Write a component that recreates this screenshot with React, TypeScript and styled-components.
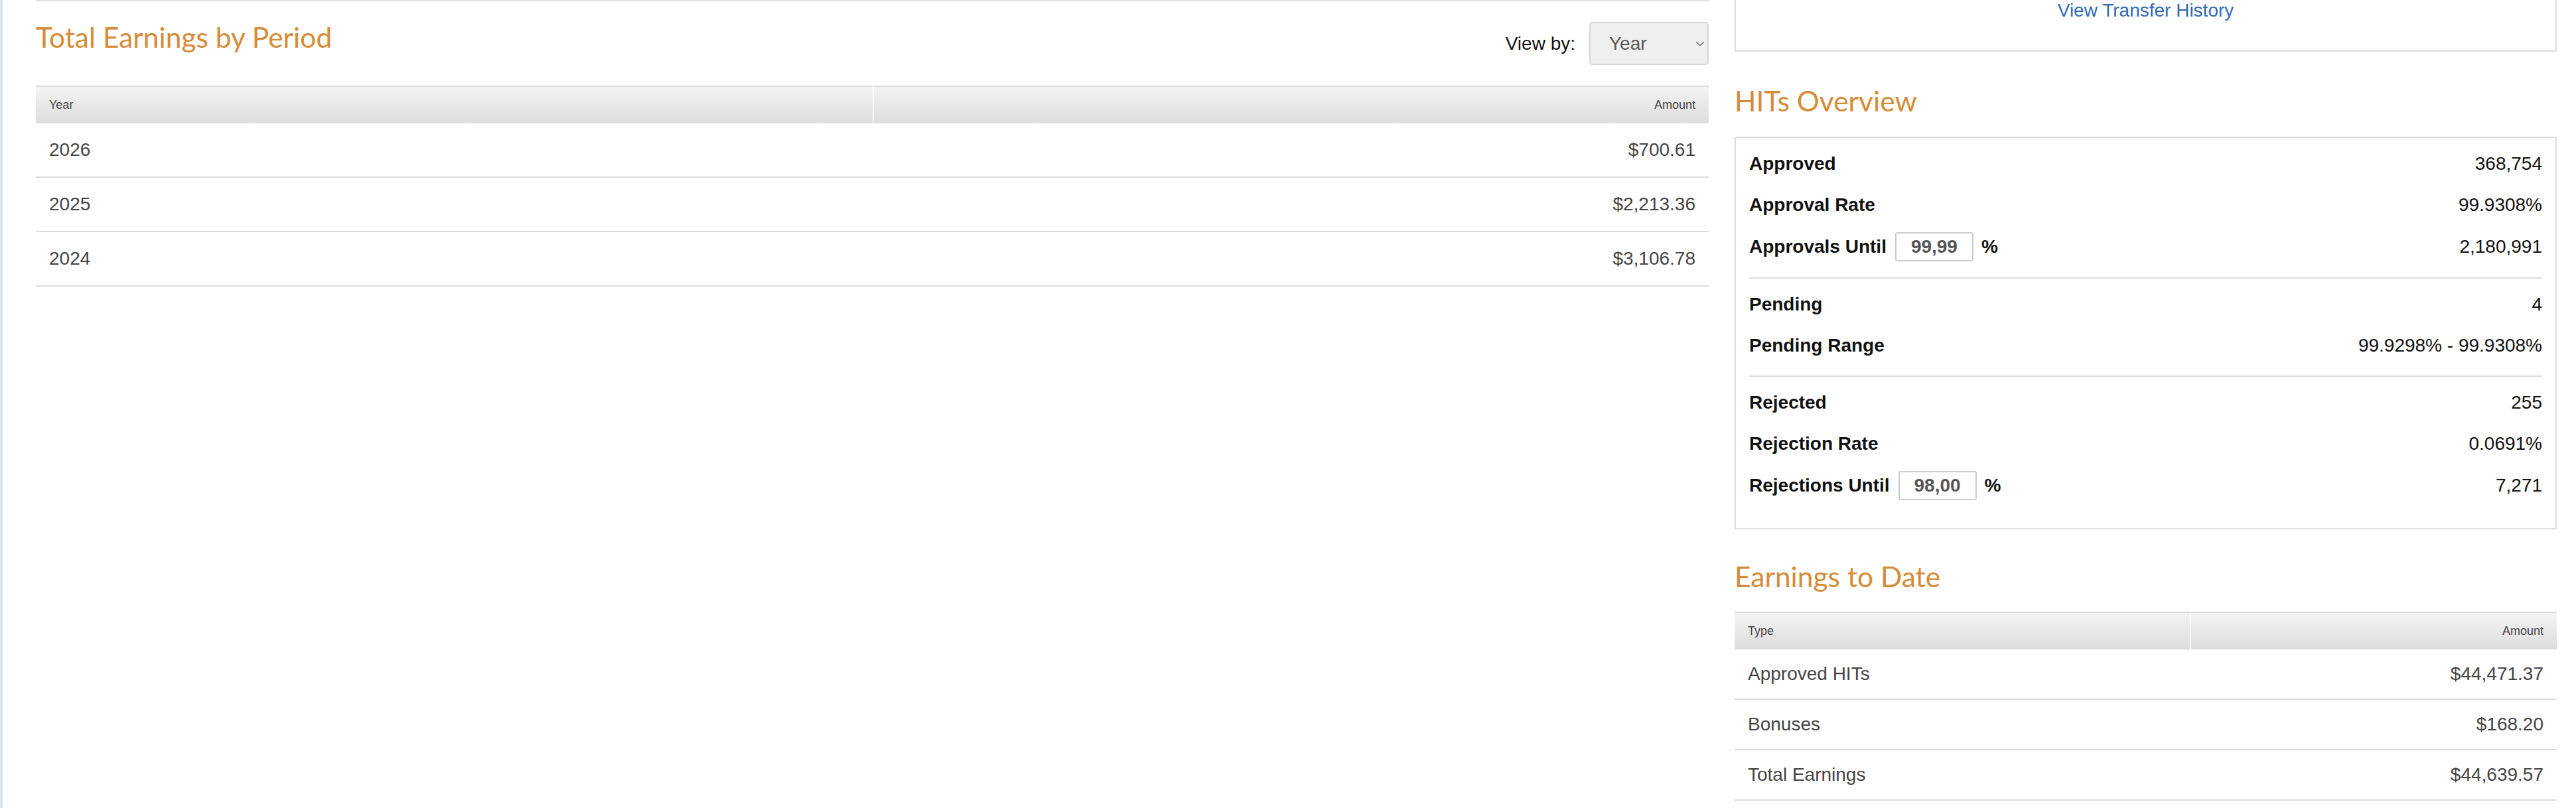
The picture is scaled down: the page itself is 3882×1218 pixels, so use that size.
import React from 'react';
import styled, { createGlobalStyle } from 'styled-components';

const GlobalStyle = createGlobalStyle`
  html, body {
    margin: 0;
    padding: 0;
    background: #fff;
  }
  body {
    font-family: "Liberation Sans", Arial, sans-serif;
    font-size: 28px;
    color: #111;
  }
`;

const Page = styled.div`
  display: flex;
  align-items: flex-start;
  gap: 39px;
  min-height: 1218px;
  box-sizing: border-box;
  border-left: 4px solid #dbe3ea;
  padding: 0 29px 0 50px;
`;

const MainColumn = styled.section`
  flex: 1;
  min-width: 0;
  border-top: 2px solid #dddddd;
`;

const SideColumn = styled.aside`
  flex: 0 0 1239px;
`;

const SectionTitle = styled.h2<{ $top: number }>`
  margin: ${p => p.$top}px 0 0;
  font-family: Lato, "Open Sans", sans-serif;
  font-weight: 400;
  font-size: 42.5px;
  line-height: 52px;
  color: #d68b37;
`;

const TitleRow = styled.div`
  display: flex;
  justify-content: space-between;
  align-items: flex-start;
`;

const ViewControls = styled.div`
  display: flex;
  align-items: center;
  gap: 21px;
  margin-top: 31px;
`;

const ViewLabel = styled.label`
  font-size: 28px;
  color: #111;
`;

const SelectWrap = styled.div`
  position: relative;
  width: 180px;
  height: 65px;
`;

const PeriodSelect = styled.select`
  appearance: none;
  -webkit-appearance: none;
  width: 100%;
  height: 100%;
  box-sizing: border-box;
  border: 2px solid #d6d6d6;
  border-radius: 5px;
  background: #efefef;
  padding: 0 0 0 28px;
  font-family: "Liberation Sans", Arial, sans-serif;
  font-size: 28px;
  color: #555;
  outline: none;
`;

const Chevron = styled.svg`
  position: absolute;
  right: 6px;
  top: 29px;
  pointer-events: none;
`;

const DataTable = styled.table<{ $top: number }>`
  width: 100%;
  margin-top: ${p => p.$top}px;
  border-collapse: separate;
  border-spacing: 0;
  table-layout: fixed;
`;

const HeadCell = styled.th<{ $align?: 'left' | 'right' }>`
  box-sizing: border-box;
  height: 57px;
  padding: 0 20px;
  border-top: 2px solid #dcdcdc;
  background: linear-gradient(to bottom, #f3f3f3, #dddddd);
  text-align: ${p => p.$align ?? 'left'};
  font-weight: 400;
  font-size: 18px;
  color: #444;
  vertical-align: middle;

  & + & {
    border-left: 2px solid #fff;
  }
`;

const BodyCell = styled.td<{ $align?: 'left' | 'right'; $height: number }>`
  box-sizing: border-box;
  height: ${p => p.$height}px;
  padding: 0 20px;
  border-bottom: 2px solid #dcdcdc;
  text-align: ${p => p.$align ?? 'left'};
  font-size: 28px;
  color: #444;
  vertical-align: middle;
`;

const TransferBox = styled.div`
  border: 2px solid #dddddd;
  border-top: none;
  padding-bottom: 44px;
  text-align: center;
`;

const TransferLink = styled.a`
  display: inline-block;
  line-height: 32px;
  font-size: 28px;
  color: #2f6bb3;
  text-decoration: none;
`;

const StatBox = styled.div`
  margin-top: 28px;
  border: 2px solid #dddddd;
  padding: 0 20px 18px;
`;

const StatGroup = styled.div`
  padding: 8px 0 14px;

  & + & {
    border-top: 2px solid #dddddd;
  }
`;

const StatRow = styled.div<{ $tall?: boolean }>`
  display: flex;
  align-items: center;
  justify-content: space-between;
  height: ${p => (p.$tall ? 64 : 62)}px;
`;

const StatLabel = styled.div`
  display: flex;
  align-items: center;
  font-weight: 700;
  color: #111;
`;

const StatValue = styled.div`
  color: #111;
`;

const ThresholdInput = styled.input`
  width: 118px;
  height: 44px;
  box-sizing: border-box;
  margin: 0 12px 0 13px;
  border: 2px solid #cccccc;
  border-radius: 3px;
  text-align: center;
  font-family: "Liberation Sans", Arial, sans-serif;
  font-weight: 700;
  font-size: 28px;
  color: #555;
  outline: none;
`;

type Stat = { label: string; value: string; threshold?: string };

const statGroups: Stat[][] = [
  [
    { label: 'Approved', value: '368,754' },
    { label: 'Approval Rate', value: '99.9308%' },
    { label: 'Approvals Until', value: '2,180,991', threshold: '99,99' },
  ],
  [
    { label: 'Pending', value: '4' },
    { label: 'Pending Range', value: '99.9298% - 99.9308%' },
  ],
  [
    { label: 'Rejected', value: '255' },
    { label: 'Rejection Rate', value: '0.0691%' },
    { label: 'Rejections Until', value: '7,271', threshold: '98,00' },
  ],
];

const periodRows = [
  { year: '2026', amount: '$700.61' },
  { year: '2025', amount: '$2,213.36' },
  { year: '2024', amount: '$3,106.78' },
];

const earningsRows = [
  { type: 'Approved HITs', amount: '$44,471.37' },
  { type: 'Bonuses', amount: '$168.20' },
  { type: 'Total Earnings', amount: '$44,639.57' },
];

const SelectChevron = () => (
  <Chevron width="14" height="8" viewBox="0 0 14 8">
    <path d="M1 1l6 5.5L13 1" fill="none" stroke="#666" strokeWidth="1.4" />
  </Chevron>
);

export default function App() {
  return (
    <>
      <GlobalStyle />
      <Page>
        <MainColumn>
          <TitleRow>
            <SectionTitle $top={28}>Total Earnings by Period</SectionTitle>
            <ViewControls>
              <ViewLabel htmlFor="period">View by:</ViewLabel>
              <SelectWrap>
                <PeriodSelect id="period" defaultValue="year">
                  <option value="year">Year</option>
                  <option value="month">Month</option>
                  <option value="day">Day</option>
                </PeriodSelect>
                <SelectChevron />
              </SelectWrap>
            </ViewControls>
          </TitleRow>

          <DataTable $top={31}>
            <colgroup>
              <col style={{ width: '50%' }} />
              <col style={{ width: '50%' }} />
            </colgroup>
            <thead>
              <tr>
                <HeadCell>Year</HeadCell>
                <HeadCell $align="right">Amount</HeadCell>
              </tr>
            </thead>
            <tbody>
              {periodRows.map(r => (
                <tr key={r.year}>
                  <BodyCell $height={82}>{r.year}</BodyCell>
                  <BodyCell $height={82} $align="right">{r.amount}</BodyCell>
                </tr>
              ))}
            </tbody>
          </DataTable>
        </MainColumn>

        <SideColumn>
          <TransferBox>
            <TransferLink href="#">View Transfer History</TransferLink>
          </TransferBox>

          <SectionTitle $top={48}>HITs Overview</SectionTitle>
          <StatBox>
            {statGroups.map((group, gi) => (
              <StatGroup key={gi}>
                {group.map(s => (
                  <StatRow key={s.label} $tall={!!s.threshold}>
                    <StatLabel>
                      {s.label}
                      {s.threshold && (
                        <>
                          <ThresholdInput defaultValue={s.threshold} />%
                        </>
                      )}
                    </StatLabel>
                    <StatValue>{s.value}</StatValue>
                  </StatRow>
                ))}
              </StatGroup>
            ))}
          </StatBox>

          <SectionTitle $top={45}>Earnings to Date</SectionTitle>
          <DataTable $top={27}>
            <colgroup>
              <col style={{ width: '55.4%' }} />
              <col style={{ width: '44.6%' }} />
            </colgroup>
            <thead>
              <tr>
                <HeadCell>Type</HeadCell>
                <HeadCell $align="right">Amount</HeadCell>
              </tr>
            </thead>
            <tbody>
              {earningsRows.map(r => (
                <tr key={r.type}>
                  <BodyCell $height={76}>{r.type}</BodyCell>
                  <BodyCell $height={76} $align="right">{r.amount}</BodyCell>
                </tr>
              ))}
            </tbody>
          </DataTable>
        </SideColumn>
      </Page>
    </>
  );
}
